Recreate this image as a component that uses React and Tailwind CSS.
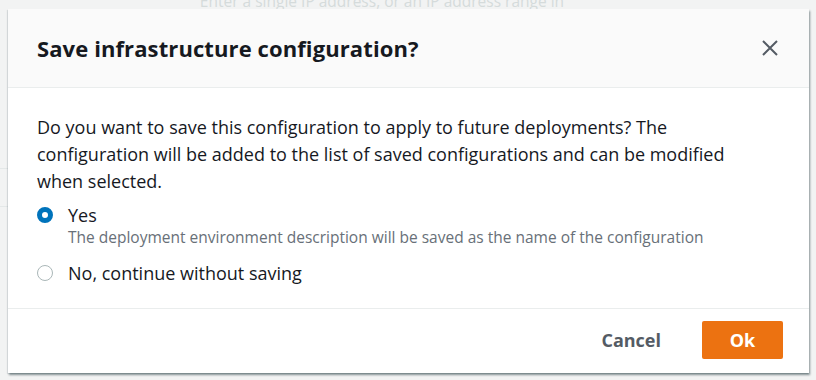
import React, { useState } from 'react';

const SaveConfigDialog = () => {
  const [choice, setChoice] = useState('yes');

  const Radio = ({ checked }) => (
    <span
      className={`w-[16px] h-[16px] rounded-full shrink-0 ${checked ? 'border-[5px] border-[#0073bb] bg-white' : 'border border-[#aab7b8] bg-white'}`}
    />
  );

  return (
    <div className="absolute left-[8px] top-[9px] w-[801px] bg-white shadow-[1px_2px_2px_rgba(0,28,36,0.45),-1px_1px_1px_rgba(0,28,36,0.1)]">
      {/* Header */}
      <div className="h-[79px] bg-[#fafafa] border-b border-[#eaeded] flex items-center justify-between pl-[29px] pr-[30px]">
        <h2 className="text-[22px] font-bold text-[#16191f] tracking-[0.1px]">Save infrastructure configuration?</h2>
        <button className="text-[#545b64]">
          <svg width="18" height="18" viewBox="0 0 18 18" fill="none" stroke="currentColor" strokeWidth="2">
            <path d="M2 2 L16 16 M16 2 L2 16" />
          </svg>
        </button>
      </div>

      {/* Body */}
      <div className="pt-[26px] pb-[23px] px-[29px] text-[#16191f]">
        <p className="max-w-[725px] text-[18px] leading-[27px]">
          Do you want to save this configuration to apply to future deployments? The configuration will be added to the list of saved configurations and can be modified when selected.
        </p>

        <div className="mt-[8px]">
          <label className="flex items-center gap-[15px] h-[24px] cursor-pointer" onClick={() => setChoice('yes')}>
            <Radio checked={choice === 'yes'} />
            <span className="text-[18px]">Yes</span>
          </label>
          <div className="pl-[31px] text-[15.5px] leading-[20px] text-[#687078]">
            The deployment environment description will be saved as the name of the configuration
          </div>
        </div>

        <label className="mt-[14px] flex items-center gap-[15px] h-[24px] cursor-pointer" onClick={() => setChoice('no')}>
          <Radio checked={choice === 'no'} />
          <span className="text-[18px]">No, continue without saving</span>
        </label>
      </div>

      {/* Footer */}
      <div className="border-t border-[#eaeded] pt-[12px] pb-[14px] pr-[26px] flex justify-end items-center gap-[21px]">
        <button className="px-[20px] h-[38px] text-[18px] font-bold text-[#545b64]">Cancel</button>
        <button className="w-[81px] h-[38px] rounded-[2px] bg-[#ec7211] text-white text-[18px] font-bold">Ok</button>
      </div>
    </div>
  );
};

export default function App() {
  return (
    <div className="relative w-[816px] h-[380px] overflow-hidden bg-[#f2f3f3]" style={{ fontFamily: '"Open Sans", "Liberation Sans", sans-serif' }}>
      {/* faded page behind the modal */}
      <div className="text-center text-[15.5px] leading-[20px] text-[#d5dbdb] -mt-[9px] pr-[52px]">
        Enter a single IP address, or an IP address range in
      </div>
      <div className="mt-[157px] border-t border-[#e4e8e8] w-[8px]" />
      <div className="mt-[37px] border-t border-[#e4e8e8] w-[8px]" />
      <SaveConfigDialog />
    </div>
  );
}
